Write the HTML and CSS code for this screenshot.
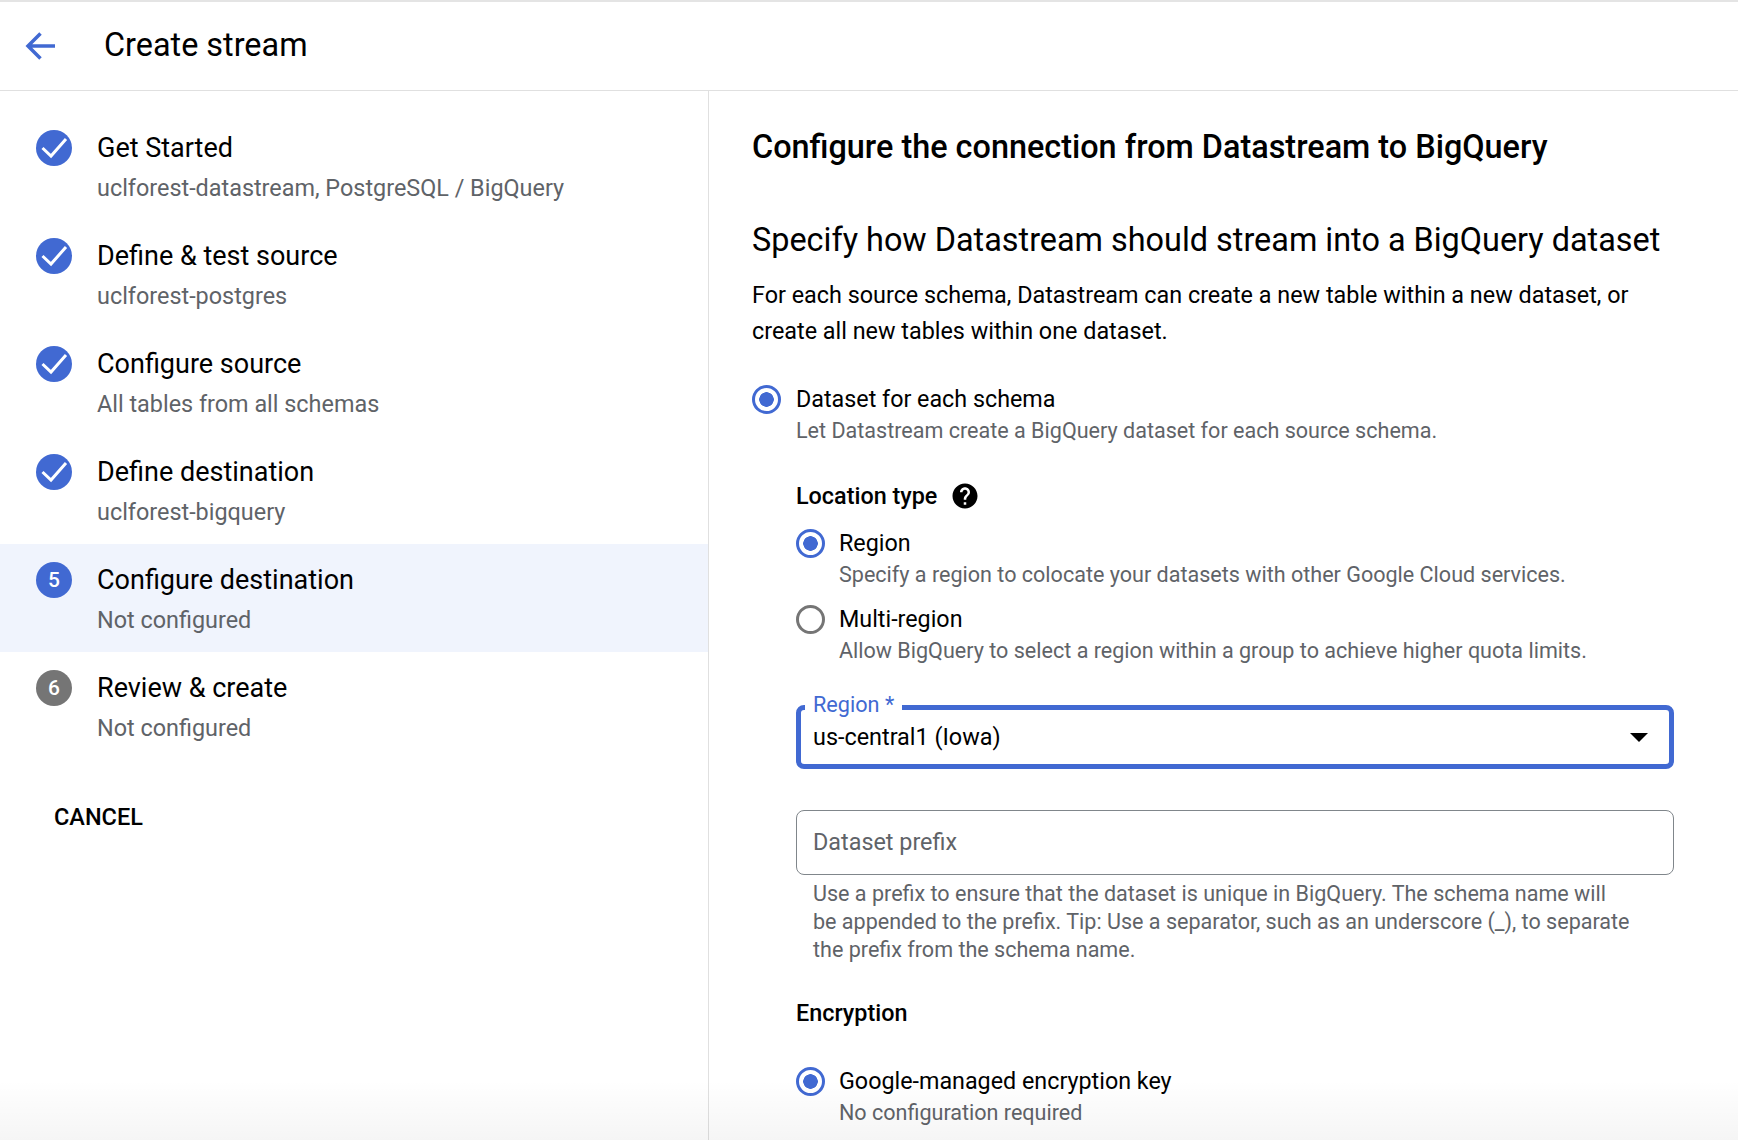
FILE: index.html
```html
<!DOCTYPE html>
<html lang="en">

<head>
  <meta charset="UTF-8">
  <meta name="viewport" content="width=device-width, initial-scale=1.0">
  <title>Create stream</title>
  <link rel="stylesheet" href="styles.css">
</head>

<body>
  <header class="topbar">
    <a class="back" href="#" aria-label="Back">
      <svg width="30" height="28" viewBox="0 0 30 28" fill="none" stroke="#4169d2" stroke-width="3.500">
        <path d="M30 14H3M15.500 1.500L3 14l12.500 12.500" />
      </svg>
    </a>
    <h1 class="page-title">Create stream</h1>
  </header>

  <div class="layout">
    <nav class="sidebar">
      <ol class="steps">
        <li class="step">
          <span class="badge"><svg width="36" height="36" viewBox="0 0 36 36" fill="none" stroke="#fff" stroke-width="3"><path d="M6.500 18l8.500 8 15-17" /></svg></span>
          <div>
            <div class="step-title">Get Started</div>
            <div class="step-sub">uclforest-datastream, PostgreSQL / BigQuery</div>
          </div>
        </li>
        <li class="step">
          <span class="badge"><svg width="36" height="36" viewBox="0 0 36 36" fill="none" stroke="#fff" stroke-width="3"><path d="M6.500 18l8.500 8 15-17" /></svg></span>
          <div>
            <div class="step-title">Define &amp; test source</div>
            <div class="step-sub">uclforest-postgres</div>
          </div>
        </li>
        <li class="step">
          <span class="badge"><svg width="36" height="36" viewBox="0 0 36 36" fill="none" stroke="#fff" stroke-width="3"><path d="M6.500 18l8.500 8 15-17" /></svg></span>
          <div>
            <div class="step-title">Configure source</div>
            <div class="step-sub">All tables from all schemas</div>
          </div>
        </li>
        <li class="step">
          <span class="badge"><svg width="36" height="36" viewBox="0 0 36 36" fill="none" stroke="#fff" stroke-width="3"><path d="M6.500 18l8.500 8 15-17" /></svg></span>
          <div>
            <div class="step-title">Define destination</div>
            <div class="step-sub">uclforest-bigquery</div>
          </div>
        </li>
        <li class="step active">
          <span class="badge">5</span>
          <div>
            <div class="step-title">Configure destination</div>
            <div class="step-sub">Not configured</div>
          </div>
        </li>
        <li class="step">
          <span class="badge todo">6</span>
          <div>
            <div class="step-title">Review &amp; create</div>
            <div class="step-sub">Not configured</div>
          </div>
        </li>
      </ol>
      <button class="cancel" type="button">CANCEL</button>
    </nav>

    <main class="content">
      <h2 class="heading">Configure the connection from Datastream to BigQuery</h2>
      <h3 class="subheading">Specify how Datastream should stream into a BigQuery dataset</h3>
      <p class="intro">For each source schema, Datastream can create a new table within a new dataset, or create all new tables within one dataset.</p>

      <div class="radio radio-top">
        <span class="dot on"></span>
        <div>
          <div class="radio-label">Dataset for each schema</div>
          <div class="radio-sub">Let Datastream create a BigQuery dataset for each source schema.</div>
        </div>
      </div>

      <div class="nested">
        <div class="group-title location">
          Location type
          <svg width="30" height="30" viewBox="0 0 24 24" fill="#000"><path d="M12 2C6.480 2 2 6.480 2 12s4.480 10 10 10 10-4.480 10-10S17.520 2 12 2zm1 17h-2v-2h2v2zm2.070-7.750l-.9.920C13.450 12.900 13 13.500 13 15h-2v-.5c0-1.100.45-2.100 1.170-2.830l1.240-1.260c.37-.36.59-.86.59-1.410 0-1.100-.9-2-2-2s-2 .9-2 2H8c0-2.210 1.790-4 4-4s4 1.790 4 4c0 .88-.36 1.680-.93 2.250z" /></svg>
        </div>

        <div class="radio">
          <span class="dot on"></span>
          <div>
            <div class="radio-label">Region</div>
            <div class="radio-sub">Specify a region to colocate your datasets with other Google Cloud services.</div>
          </div>
        </div>
        <div class="radio">
          <span class="dot"></span>
          <div>
            <div class="radio-label">Multi-region</div>
            <div class="radio-sub">Allow BigQuery to select a region within a group to achieve higher quota limits.</div>
          </div>
        </div>

        <div class="select">
          <span class="select-label">Region *</span>
          <span class="select-value">us-central1 (Iowa)</span>
          <svg class="caret" width="18" height="9" viewBox="0 0 18 9" fill="#000"><path d="M0 0h18L9 9z" /></svg>
        </div>

        <div class="field">Dataset prefix</div>
        <p class="hint">Use a prefix to ensure that the dataset is unique in BigQuery. The schema name will be appended to the prefix. Tip: Use a separator, such as an underscore (_), to separate the prefix from the schema name.</p>

        <div class="group-title encryption">Encryption</div>
        <div class="radio radio-key">
          <span class="dot on"></span>
          <div>
            <div class="radio-label">Google-managed encryption key</div>
            <div class="radio-sub">No configuration required</div>
          </div>
        </div>
      </div>
    </main>
  </div>

  <div class="fade"></div>
</body>

</html>
```

FILE: styles.css
```css
* {
  box-sizing: border-box;
}

html,
body {
  height: 100%;
}

body {
  margin: 0;
  overflow: hidden;
  display: flex;
  flex-direction: column;
  font-family: Roboto, Arial, sans-serif;
  color: #000;
  background: #fff;
}

.topbar {
  height: 91px;
  flex-shrink: 0;
  display: flex;
  align-items: center;
  border-top: 2px solid #e4e4e4;
  border-bottom: 1px solid #e0e0e0;
  padding-left: 25px;
}

.back {
  display: flex;
  width: 79px;
}

.page-title {
  margin: 0 0 3px;
  font-size: 32.400px;
  font-weight: 400;
}

.layout {
  flex: 1;
  display: flex;
  min-height: 0;
}

.sidebar {
  width: 709px;
  flex-shrink: 0;
  border-right: 1px solid #e0e0e0;
  padding-top: 21px;
}

.steps {
  list-style: none;
  margin: 0;
  padding: 0;
}

.step {
  height: 108px;
  display: flex;
  gap: 25px;
  padding: 18px 0 0 36px;
}

.step.active {
  background: #f0f4fd;
}

.badge {
  width: 36px;
  height: 36px;
  border-radius: 50%;
  background: #4169d2;
  color: #fff;
  font-size: 21px;
  font-weight: 500;
  display: flex;
  align-items: center;
  justify-content: center;
  flex-shrink: 0;
}

.badge.todo {
  background: #757575;
}

.step-title {
  font-size: 27px;
  line-height: 36px;
}

.step-sub {
  margin-top: 7px;
  font-size: 23.400px;
  line-height: 30px;
  color: #5f6368;
}

.cancel {
  display: block;
  margin: 41px 0 0 54px;
  padding: 0;
  border: none;
  background: none;
  font-family: inherit;
  font-size: 23.500px;
  font-weight: 500;
  line-height: 32px;
  color: #000;
}

.content {
  flex: 1;
  padding: 37px 0 0 43px;
}

.heading {
  margin: 0;
  font-size: 32.400px;
  font-weight: 500;
  line-height: 38px;
}

.subheading {
  margin: 54px 0 0;
  font-size: 32.400px;
  font-weight: 400;
  line-height: 40px;
}

.intro {
  margin: 17px 0 0;
  width: 890px;
  font-size: 23.360px;
  line-height: 36px;
}

.radio {
  display: flex;
  gap: 15px;
}

.radio-top {
  margin-top: 36px;
}

.dot {
  width: 29px;
  height: 29px;
  flex-shrink: 0;
  border: 3.500px solid #757575;
  border-radius: 50%;
  background: #fff;
}

.dot.on {
  border-color: #4169d2;
  background: radial-gradient(circle, #4169d2 0 7px, #fff 7.500px);
}

.radio-label {
  margin-top: -1px;
  font-size: 23.300px;
  line-height: 30px;
}

.radio-sub {
  margin-top: 2px;
  font-size: 21.560px;
  line-height: 30px;
  color: #5f6368;
}

.nested {
  margin-left: 44px;
}

.nested .radio {
  gap: 14px;
}

.group-title {
  display: flex;
  align-items: center;
  gap: 13px;
  font-size: 23.360px;
  font-weight: 500;
  line-height: 30px;
}

.location {
  margin: 35px 0 18px;
}

.radio + .radio {
  margin-top: 15px;
}

.select {
  position: relative;
  margin-top: 39px;
  width: 878px;
  height: 64px;
  border: 5px solid #4169d2;
  border-radius: 8px;
  display: flex;
  align-items: center;
  padding: 0 21px 0 12px;
  justify-content: space-between;
}

.select-label {
  position: absolute;
  top: -19px;
  left: 4px;
  padding: 0 8px;
  background: #fff;
  font-size: 21.650px;
  line-height: 28px;
  color: #4169d2;
}

.select-value {
  font-size: 23.400px;
}

.field {
  margin-top: 41px;
  width: 878px;
  height: 65px;
  border: 1px solid #80868b;
  border-radius: 8px;
  padding: 0 16px 2px;
  display: flex;
  align-items: center;
  font-size: 23.360px;
  color: #5f6368;
}

.hint {
  margin: 5px 0 0;
  padding-left: 17px;
  width: 838px;
  font-size: 21.560px;
  line-height: 28px;
  color: #5f6368;
}

.encryption {
  margin-top: 34px;
}

.radio-key {
  margin-top: 39px;
}

.fade {
  position: absolute;
  left: 0;
  right: 0;
  bottom: 0;
  height: 60px;
  background: linear-gradient(rgba(0, 0, 0, 0), rgba(0, 0, 0, 0.04));
  pointer-events: none;
}
```
